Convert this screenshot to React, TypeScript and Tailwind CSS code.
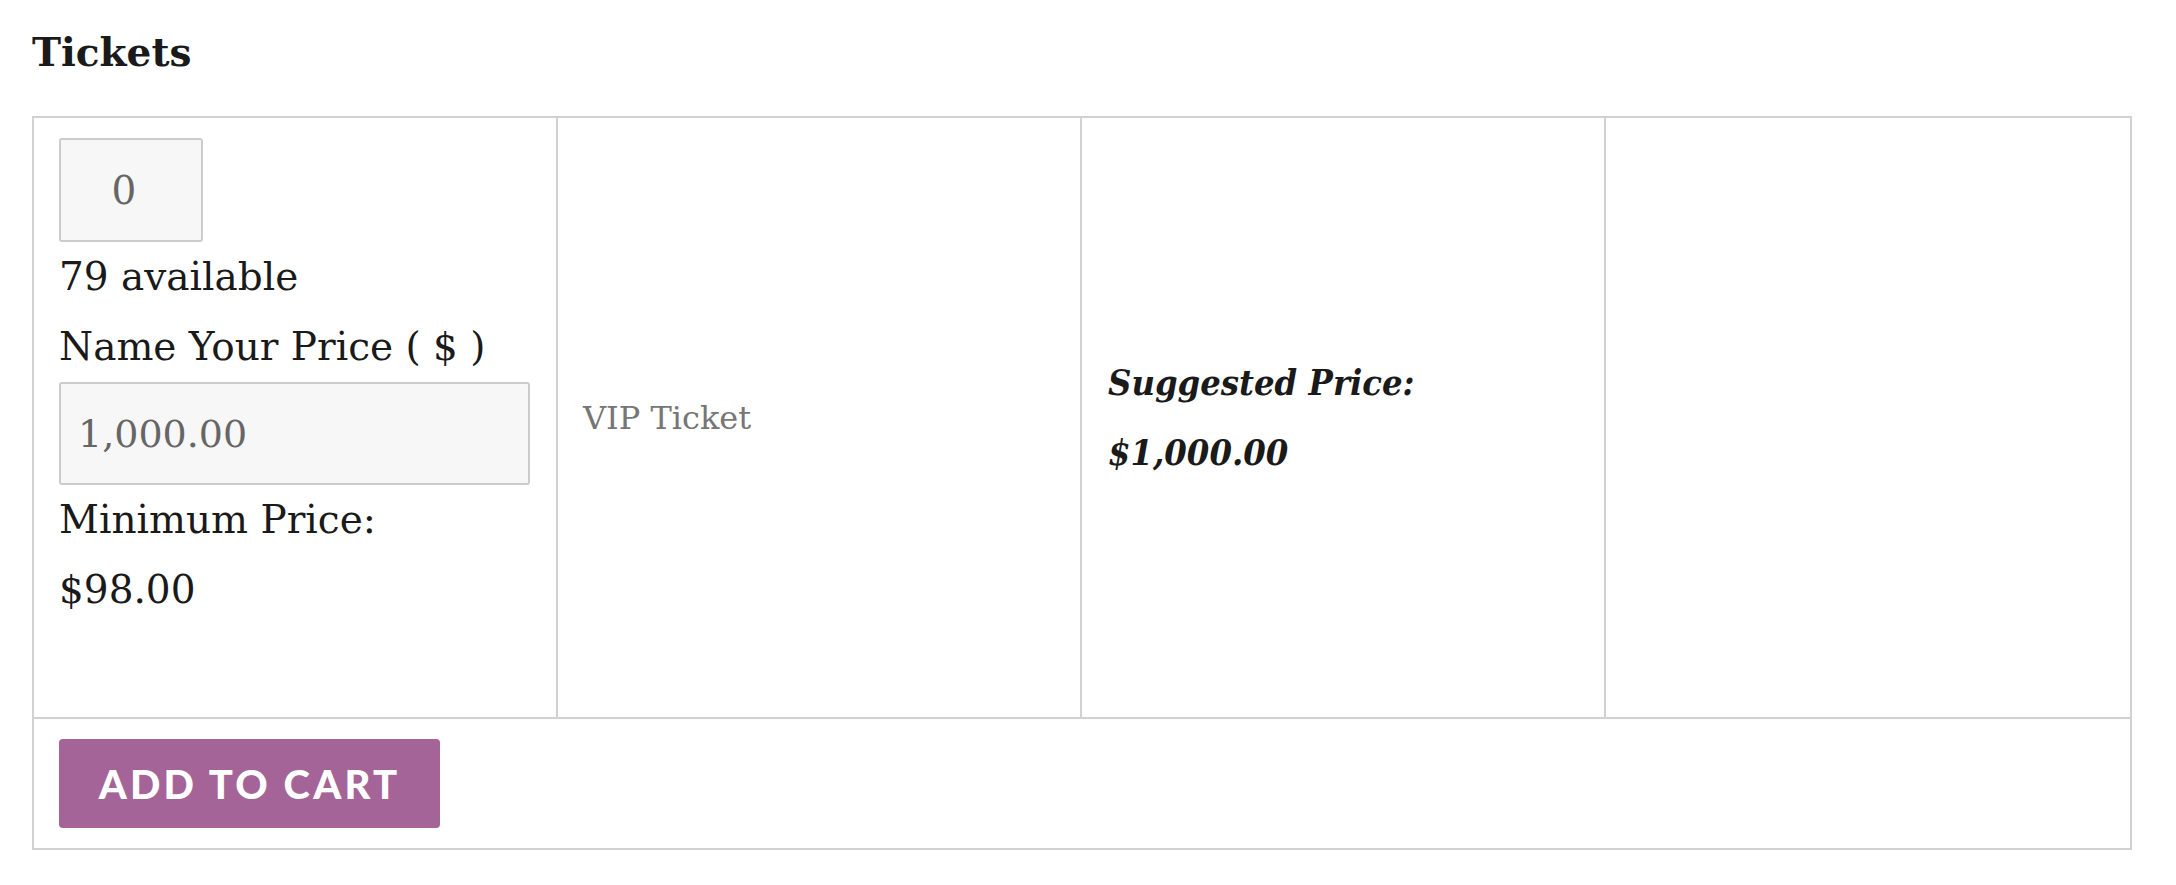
export default function App() {
    const serif = "font-['DejaVu_Serif',serif]";

    return (
        <div className={`min-h-screen bg-white px-[32px] pt-[17px] text-[#1a1a1a] ${serif}`}>
            {/* Title */}
            <h2 className="text-[39px] font-bold leading-[70px] mb-[29px]">Tickets</h2>

            {/* Ticket table */}
            <div className="w-[2100px] border-2 border-[#d1d1d1]">
                <div className="grid grid-cols-4 h-[601px] border-b-2 border-[#d1d1d1]">
                    {/* Quantity + price */}
                    <div className="border-r-2 border-[#d1d1d1] pl-[25px] pt-[20px] text-[39px] leading-[70px]">
                        <input
                            readOnly
                            value="0"
                            className="block w-[144px] h-[104px] bg-[#f7f7f7] border-2 border-[#cccccc] rounded-[3px] pr-[14px] text-center text-[#666] outline-none"
                        />
                        <p>79 available</p>
                        <p>Name Your Price ( $ )</p>
                        <input
                            readOnly
                            value="1,000.00"
                            className="block w-[471px] h-[103px] bg-[#f7f7f7] border-2 border-[#cccccc] rounded-[3px] pl-[17px] text-[38px] text-[#666] outline-none"
                        />
                        <p>Minimum Price:</p>
                        <p>$98.00</p>
                    </div>

                    {/* Ticket name */}
                    <div className="flex items-center border-r-2 border-[#d1d1d1] pl-[25px]">
                        <p className="text-[32px] leading-[70px] text-[#767676]">VIP Ticket</p>
                    </div>

                    {/* Suggested price */}
                    <div className="flex flex-col justify-center border-r-2 border-[#d1d1d1] pl-[26px] pb-[2px]">
                        <p className="font-['DejaVu_Serif_Condensed','DejaVu_Serif',serif] font-stretch-condensed text-[36px] italic font-bold leading-[70px]">
                            Suggested Price:
                        </p>
                        <p className="font-['DejaVu_Serif_Condensed','DejaVu_Serif',serif] font-stretch-condensed text-[36px] italic font-bold leading-[70px]">
                            $1,000.00
                        </p>
                    </div>

                    <div />
                </div>

                {/* Actions */}
                <div className="pl-[25px] py-[20px]">
                    <button className="w-[381px] h-[89px] bg-[#a46497] rounded-[4px] text-white font-['Lato',sans-serif] font-black text-[40px] tracking-[0.08em] uppercase">
                        Add to cart
                    </button>
                </div>
            </div>
        </div>
    );
}
